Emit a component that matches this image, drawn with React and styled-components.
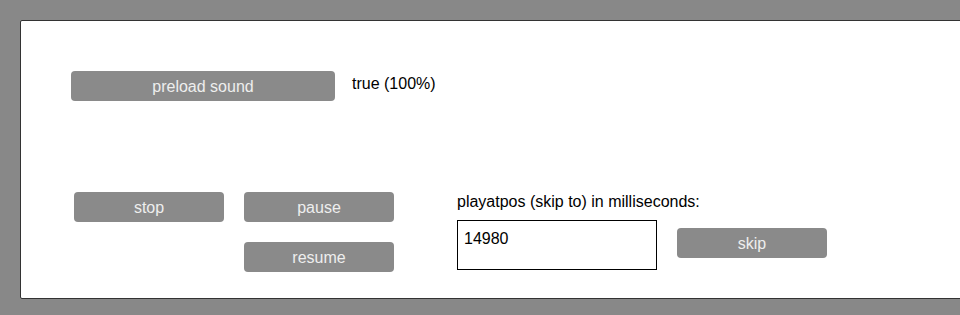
import React from "react";
import styled, { createGlobalStyle } from "styled-components";

const GlobalStyle = createGlobalStyle`
  html, body {
    margin: 0;
    padding: 0;
    background: #888888;
    overflow: hidden;
    font-family: "Liberation Sans", Arial, sans-serif;
  }
`;

const Panel = styled.div`
  box-sizing: border-box;
  margin: 20px 0 0 20px;
  width: 960px;
  height: 279px;
  background: #ffffff;
  border: 1px solid #333333;
  border-radius: 2px;
  padding: 50px 0 0 50px;
`;

const Row = styled.div`
  display: flex;
  align-items: flex-start;
  gap: ${(p) => p.gap || 0}px;
  margin-top: ${(p) => p.top || 0}px;
  padding-left: ${(p) => p.indent || 0}px;
`;

const Column = styled.div`
  display: flex;
  flex-direction: column;
  gap: ${(p) => p.gap || 0}px;
  margin-left: ${(p) => p.shift || 0}px;
`;

const Button = styled.button`
  box-sizing: border-box;
  width: ${(p) => p.width || 150}px;
  height: 30px;
  margin-top: ${(p) => p.top || 0}px;
  padding: 2px 0 0;
  border: none;
  border-radius: 4px;
  background: #8a8a8a;
  color: #eeeeee;
  font-family: "Liberation Sans", Arial, sans-serif;
  font-size: 16px;
  cursor: pointer;
`;

const Status = styled.span`
  padding-top: 4px;
  font-size: 16px;
  line-height: 18px;
  color: #000;
`;

const Label = styled.div`
  margin-top: 1px;
  font-size: 16px;
  line-height: 18px;
  color: #000;
`;

const PosInput = styled.textarea`
  box-sizing: border-box;
  width: 200px;
  height: 50px;
  margin: 0;
  padding: 9px 6px 0;
  border: 1px solid #000;
  border-radius: 0;
  resize: none;
  outline: none;
  font-family: "Liberation Sans", Arial, sans-serif;
  font-size: 16px;
  line-height: 18px;
  color: #000;
  background: #fff;
`;

export default function App() {
  return (
    <>
      <GlobalStyle />
      <Panel>
        <Row gap={17}>
          <Button width={264}>preload sound</Button>
          <Status>true (100%)</Status>
        </Row>
        <Row top={91} indent={3} gap={20}>
          <Column>
            <Button>stop</Button>
          </Column>
          <Column gap={20}>
            <Button>pause</Button>
            <Button>resume</Button>
          </Column>
          <Column gap={9} shift={43}>
            <Label>playatpos (skip to) in milliseconds:</Label>
            <Row gap={20}>
              <PosInput defaultValue="14980" />
              <Button top={8}>skip</Button>
            </Row>
          </Column>
        </Row>
      </Panel>
    </>
  );
}
